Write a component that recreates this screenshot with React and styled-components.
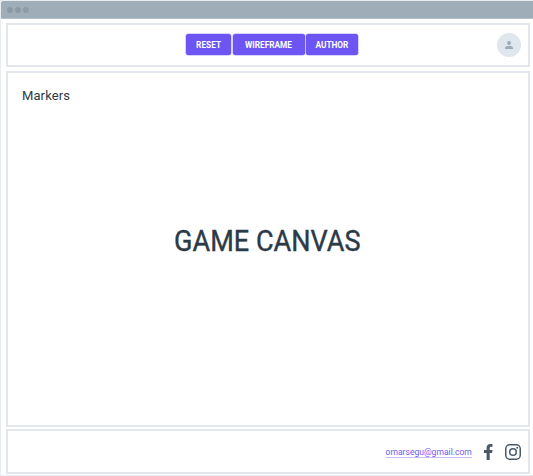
import React from "react";
import styled, { createGlobalStyle } from "styled-components";

const GlobalStyle = createGlobalStyle`
  * { box-sizing: border-box; }
  body { margin: 0; background: #fff; overflow: hidden; }
`;

const Window = styled.div`
  width: 533px;
  height: 476px;
  display: flex;
  flex-direction: column;
  background: #fff;
  border: solid #e9edf1;
  border-width: 1px 0 1px 1px;
  font-family: Roboto, "Liberation Sans", sans-serif;
  color: #2c3a47;
`;

const TitleBar = styled.div`
  flex: none;
  height: 18px;
  display: flex;
  align-items: center;
  gap: 2px;
  padding-left: 6px;
  background: #9fadb9;
  border-bottom: 1px solid #b4bfc9;
  border-top-left-radius: 2px;
`;

const Dot = styled.span`
  width: 6px;
  height: 6px;
  border-radius: 50%;
  background: #8e9ba7;
`;

const Page = styled.div`
  display: flex;
  flex-direction: column;
  padding: 4px 3px 0 5px;
`;

const Panel = styled.section`
  border: 2px solid #e1e7ec;
  display: flex;
  align-items: center;
`;

const Header = styled(Panel)`
  height: 44px;
  margin-bottom: 4px;
  display: grid;
  grid-template-columns: 1fr auto 1fr;
  padding: 0 7px 1px;
`;

const Canvas = styled(Panel)`
  height: 356px;
  flex-direction: column;
  margin-bottom: 2px;
`;

const Footer = styled(Panel)`
  height: 45px;
  justify-content: flex-end;
  padding-right: 7px;
`;

const Buttons = styled.div`
  grid-column: 2;
  display: flex;
  width: 172px;
  margin-left: 8px;
`;

const Button = styled.button`
  width: ${(p) => p.$width}px;
  height: 21px;
  margin: 0 ${(p) => p.$gap || 0}px 0 0;
  padding: 1px 0 0;
  border: 0;
  border-radius: 2.5px;
  background: #6c55f2;
  color: #fff;
  font: 700 9px/20px Roboto, sans-serif;
  text-align: center;
  white-space: nowrap;
  box-shadow: 0 0 0 0.5px #b3a8f8;
`;

const ButtonText = styled.span`
  display: inline-block;
  transform: scaleX(0.92);
`;

const Avatar = styled.div`
  width: 24px;
  height: 24px;
  justify-self: end;
  display: grid;
  place-items: center;
  border-radius: 50%;
  background: #dfe6ee;
  color: #9babb8;
`;

const Label = styled.div`
  align-self: flex-start;
  margin: 13px 0 0 14px;
  font-size: 13px;
  line-height: 20px;
  letter-spacing: 0.1px;
`;

const Title = styled.h1`
  margin: 117px 1px 0 0;
  font-size: 30px;
  font-weight: 400;
  line-height: 36px;
  white-space: nowrap;
  -webkit-text-stroke: 0.4px currentColor;
  transform: scaleX(0.902);
`;

const Email = styled.a`
  margin-right: 12px;
  padding-top: 1px;
  border-bottom: 1px solid #c5bcfa;
  color: #7059f2;
  font-size: 9px;
  line-height: 10px;
  text-decoration: none;
  transform: scaleX(0.95);
  transform-origin: right;
`;

const Icon = styled.svg`
  display: block;
  flex: none;
  color: #495966;
  margin-right: ${(p) => p.$gap || 0}px;
`;

export default function App() {
  return (
    <>
      <GlobalStyle />
      <Window>
        <TitleBar>
          <Dot />
          <Dot />
          <Dot />
        </TitleBar>
        <Page>
          <Header as="header">
            <Buttons>
              <Button $width={44.5} $gap={2.5}><ButtonText>RESET</ButtonText></Button>
              <Button $width={72} $gap={1}><ButtonText>WIREFRAME</ButtonText></Button>
              <Button $width={51.5}><ButtonText>AUTHOR</ButtonText></Button>
            </Buttons>
            <Avatar>
              <svg width="8" height="8" viewBox="0 0 8 8" fill="currentColor">
                <circle cx="4" cy="2" r="1.9" />
                <path d="M0 8V6.7C0 5.4 2.6 4.7 4 4.7S8 5.4 8 6.7V8Z" />
              </svg>
            </Avatar>
          </Header>
          <Canvas as="main">
            <Label>Markers</Label>
            <Title>GAME CANVAS</Title>
          </Canvas>
          <Footer as="footer">
            <Email href="mailto:omarsegu@gmail.com">omarsegu@gmail.com</Email>
            <Icon $gap={12} width="9" height="16" viewBox="0 0 9 16" fill="currentColor">
              <path d="M2.6 16V9H0V6.1h2.6V3.9C2.6 1.4 4.1 0 6.4 0c1 0 2.1.2 2.1.2v2.5H7.2c-1.2 0-1.5.7-1.5 1.5v1.9h2.8L8 9H5.7v7Z" />
            </Icon>
            <Icon width="16" height="16" viewBox="0 0 16 16" fill="none" stroke="currentColor" strokeWidth="1.5">
              <rect x="0.75" y="0.75" width="14.5" height="14.5" rx="4" />
              <circle cx="8" cy="8" r="3.3" />
              <circle cx="12.2" cy="3.8" r="1" fill="currentColor" stroke="none" />
            </Icon>
          </Footer>
        </Page>
      </Window>
    </>
  );
}
